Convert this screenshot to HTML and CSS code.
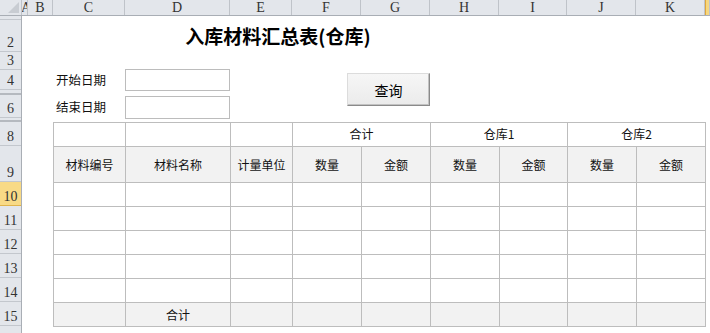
FILE: index.html
```html
<!DOCTYPE html>
<html lang="zh-CN">
<head>
  <meta charset="UTF-8" />
  <title>入库材料汇总表</title>
  <link rel="stylesheet" href="styles.css">
</head>
<body>
  <div class="colbar">
    <div class="corner"><span class="tri"></span></div>
    <div class="ch w-a">A</div>
    <div class="ch w-b">B</div>
    <div class="ch w-c">C</div>
    <div class="ch w-d">D</div>
    <div class="ch w-e">E</div>
    <div class="ch w-f">F</div>
    <div class="ch w-g">G</div>
    <div class="ch w-h">H</div>
    <div class="ch w-i">I</div>
    <div class="ch w-j">J</div>
    <div class="ch w-k">K</div>
    <div class="ch ch-sel">L</div>
  </div>

  <div class="main">
    <div class="rowheads">
      <div class="rh h4">1</div>
      <div class="rh h32">2</div>
      <div class="rh h18">3</div>
      <div class="rh h20">4</div>
      <div class="rh h5 hidden-row"></div>
      <div class="rh h23">6</div>
      <div class="rh h4 hidden-row"></div>
      <div class="rh h24">8</div>
      <div class="rh h36">9</div>
      <div class="rh h24 rh-sel">10</div>
      <div class="rh h24">11</div>
      <div class="rh h24">12</div>
      <div class="rh h24">13</div>
      <div class="rh h24">14</div>
      <div class="rh h24">15</div>
      <div class="rh h24">16</div>
    </div>

    <div class="sheet">
      <h1 class="title">入库材料汇总表(仓库)</h1>

      <div class="label label-start">开始日期</div>
      <div class="textbox box-start"></div>
      <div class="label label-end">结束日期</div>
      <div class="textbox box-end"></div>

      <button class="query-btn">查询</button>

      <div class="report">
        <div class="cell"></div>
        <div class="cell"></div>
        <div class="cell"></div>
        <div class="cell span2">合计</div>
        <div class="cell span2">仓库1</div>
        <div class="cell span2">仓库2</div>

        <div class="cell head">材料编号</div>
        <div class="cell head">材料名称</div>
        <div class="cell head">计量单位</div>
        <div class="cell head">数量</div>
        <div class="cell head">金额</div>
        <div class="cell head">数量</div>
        <div class="cell head">金额</div>
        <div class="cell head">数量</div>
        <div class="cell head">金额</div>

        <div class="cell"></div><div class="cell"></div><div class="cell"></div><div class="cell"></div><div class="cell"></div><div class="cell"></div><div class="cell"></div><div class="cell"></div><div class="cell"></div>
        <div class="cell"></div><div class="cell"></div><div class="cell"></div><div class="cell"></div><div class="cell"></div><div class="cell"></div><div class="cell"></div><div class="cell"></div><div class="cell"></div>
        <div class="cell"></div><div class="cell"></div><div class="cell"></div><div class="cell"></div><div class="cell"></div><div class="cell"></div><div class="cell"></div><div class="cell"></div><div class="cell"></div>
        <div class="cell"></div><div class="cell"></div><div class="cell"></div><div class="cell"></div><div class="cell"></div><div class="cell"></div><div class="cell"></div><div class="cell"></div><div class="cell"></div>
        <div class="cell"></div><div class="cell"></div><div class="cell"></div><div class="cell"></div><div class="cell"></div><div class="cell"></div><div class="cell"></div><div class="cell"></div><div class="cell"></div>

        <div class="cell head"></div>
        <div class="cell head">合计</div>
        <div class="cell head"></div>
        <div class="cell head"></div>
        <div class="cell head"></div>
        <div class="cell head"></div>
        <div class="cell head"></div>
        <div class="cell head"></div>
        <div class="cell head"></div>
      </div>
    </div>
  </div>
</body>
</html>
```

FILE: styles.css
```css
html, body {
  overflow: hidden;
}
body {
  margin: 0;
  height: 333px;
  background: #fff;
  font-family: "Noto Sans CJK SC", "Noto Sans", sans-serif;
  font-size: 12px;
  color: #111;
}

/* column letters */
.colbar {
  display: flex;
  height: 16px;
  background: #e3e6eb;
  border-bottom: 1px solid #a9aeb5;
  box-sizing: border-box;
}
.corner {
  width: 22px;
  flex: none;
  position: relative;
  border-right: 1px solid #bfc3c9;
  box-sizing: border-box;
}
.tri {
  position: absolute;
  right: 2px;
  bottom: 2px;
  width: 0;
  height: 0;
  border-left: 11px solid transparent;
  border-bottom: 11px solid #c8ccd2;
}
.ch {
  flex: none;
  box-sizing: border-box;
  border-right: 1px solid #bfc3c9;
  font-family: "Liberation Serif", "DejaVu Serif", serif;
  font-size: 14px;
  line-height: 15px;
  text-align: center;
  color: #333;
  overflow: hidden;
}
.w-a { width: 6px; text-indent: -1px; }
.w-b { width: 25px; }
.w-c { width: 72px; }
.w-d { width: 105px; }
.w-e { width: 62px; }
.w-f { width: 69px; }
.w-g { width: 69px; }
.w-h { width: 69px; }
.w-i { width: 68px; }
.w-j { width: 69px; }
.w-k { width: 69px; }
.ch-sel {
  flex: 1;
  background: #f6d77f;
  border-left: 1px solid #e0a73b;
  color: transparent;
}

.main {
  display: flex;
  align-items: flex-start;
}

/* row numbers */
.rowheads {
  width: 22px;
  flex: none;
  background: #e3e6eb;
  border-right: 1px solid #a9aeb5;
  box-sizing: border-box;
}
.rh {
  box-sizing: border-box;
  border-bottom: 1px solid #c3c7cd;
  display: flex;
  align-items: flex-end;
  justify-content: center;
  overflow: hidden;
  font-family: "Liberation Serif", "DejaVu Serif", serif;
  font-size: 14px;
  line-height: 16px;
  color: #333;
}
.hidden-row { border-bottom: 2px solid #b5b9bf; }
.rh-sel {
  background: #f8da86;
  border-bottom-color: #e0b44c;
}
.h4 { height: 4px; }
.h5 { height: 5px; }
.h18 { height: 18px; }
.h20 { height: 20px; }
.h23 { height: 23px; }
.h24 { height: 24px; }
.h32 { height: 32px; }
.h36 { height: 36px; }

/* sheet area, columns A..L */
.sheet {
  flex: 1;
  display: grid;
  grid-template-columns: 6px 25px 72px 105px 62px 69px 69px 69px 68px 69px 69px 1fr;
  grid-template-rows: 4px 32px 18px 20px 5px 23px 4px auto;
  align-items: start;
}

.title {
  grid-column: 4 / 8;
  grid-row: 2;
  margin: 0;
  align-self: end;
  text-align: center;
  font-size: 19px;
  font-weight: bold;
  line-height: 22px;
  padding-bottom: 5px;
  padding-left: 1px;
  color: #000;
}

.label {
  grid-column: 3;
  padding-left: 3px;
  align-self: center;
  line-height: 16px;
  font-size: 12.5px;
  color: #111;
}
.label-start { grid-row: 4; }
.label-end { grid-row: 6; }

.textbox {
  grid-column: 4;
  border: 1px solid #bcbcbc;
  background: #fff;
  box-sizing: border-box;
}
.box-start { grid-row: 4; height: 22px; margin-top: -1px; }
.box-end { grid-row: 6; height: 23px; margin-top: 1px; }

.query-btn {
  grid-column: 6 / 8;
  grid-row: 4 / 7;
  justify-self: end;
  align-self: start;
  margin-top: 3px;
  width: 83px;
  height: 33px;
  padding: 0;
  font-family: "Noto Sans CJK SC", sans-serif;
  font-size: 14px;
  color: #000;
  background: linear-gradient(#f6f6f6, #ebebeb);
  border: 1px solid;
  border-color: #dcdcdc #8a8a8a #8a8a8a #dcdcdc;
  box-shadow: inset -1px -1px 0 #c2c2c2;
}

/* report table */
.report {
  grid-column: 3 / 12;
  grid-row: 8;
  justify-self: start;
  align-self: start;
  display: grid;
  grid-template-columns: 71px 104px 61px 68px 68px 68px 67px 68px 68px;
  grid-template-rows: 23px 35px repeat(6, 23px);
  gap: 1px;
  background: #bdbdbd;
  border: 1px solid #bdbdbd;
}
.cell {
  background: #fff;
  display: flex;
  align-items: center;
  justify-content: center;
  white-space: nowrap;
  color: #111;
}
.cell.head { background: #f2f2f2; }
.span2 { grid-column: span 2; padding-bottom: 3px; }
```
